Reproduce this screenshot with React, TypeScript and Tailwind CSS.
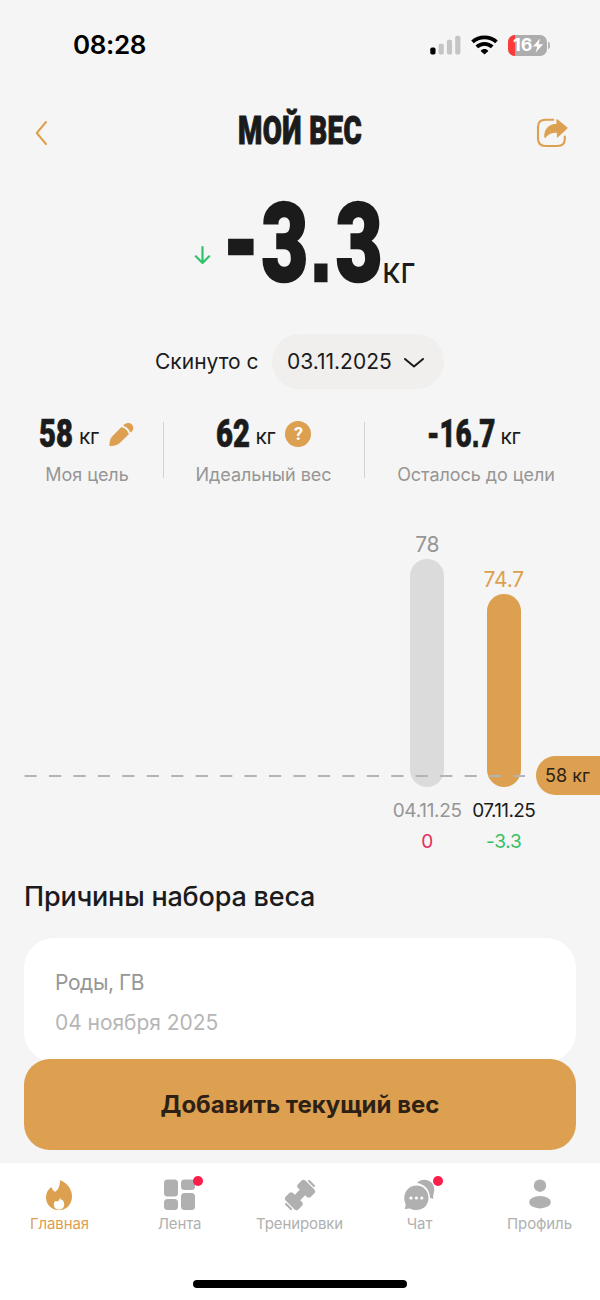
import React from 'react';
import clsx from 'clsx';

interface WeightEntry {
  date: string;
  weight: string;
  delta: string;
  height: number;
  current: boolean;
}

const entries: WeightEntry[] = [
  { date: '04.11.25', weight: '78', delta: '0', height: 228, current: false },
  { date: '07.11.25', weight: '74.7', delta: '-3.3', height: 193, current: true },
];

function StatusBar() {
  return (
    <div className="h-[90px] flex items-center justify-between pl-[73px] pr-[50px]">
      <span className="text-[26px] font-semibold text-black leading-none tracking-[-0.4px]">08:28</span>
      <div className="flex items-center">
        <svg width="31" height="20" viewBox="0 0 31 20" className="mr-[10px]">
          <rect x="0.3" y="12.5" width="5.2" height="7" rx="1.7" fill="#000" />
          <rect x="8.6" y="8.7" width="5.2" height="10.8" rx="1.7" fill="#c5c5c5" />
          <rect x="16.9" y="4.7" width="5.2" height="14.8" rx="1.7" fill="#c5c5c5" />
          <rect x="25.2" y="0.7" width="5.2" height="18.8" rx="1.7" fill="#c5c5c5" />
        </svg>
        <svg width="27" height="20" viewBox="0 0 27 20" className="mr-[10px]">
          <g fill="none" stroke="#000" strokeWidth="3.9">
            <path d="M1.5 6.9C8.3 0.8 18.7 0.8 25.5 6.9" />
            <path d="M5.8 11.9C10.2 7.8 16.8 7.8 21.2 11.9" />
          </g>
          <path d="M13.5 19.6L9.6 15.9C11.8 13.5 15.2 13.5 17.4 15.9Z" fill="#000" />
        </svg>
        <div className="relative w-[39px] h-[21px] rounded-[7px] overflow-hidden bg-[#adadad]">
          <div className="absolute left-0 top-0 w-[7px] h-full bg-[#fb3b37]" />
          <div className="relative flex items-center h-full pl-[5px]">
            <span className="text-[18px] font-bold text-white leading-none">16</span>
            <svg width="12" height="15" viewBox="0 0 10 13" className="-ml-[0.5px] shrink-0">
              <path d="M6.8 0.5L0.6 7.4H4.4L3 12.6L9.4 5.4H5.5Z" fill="#fff" />
            </svg>
          </div>
        </div>
        <div className="w-[2px] h-[7px] ml-[1px] rounded-r-full bg-[#b5b5b5]" />
      </div>
    </div>
  );
}

function Header() {
  return (
    <div className="h-[84px] flex items-center justify-between pl-[35px] pr-[32px]">
      <svg width="13" height="26" viewBox="0 0 13 26" className="mt-[2px]">
        <path d="M11 2L1.8 13L11 24" fill="none" stroke="#dca050" strokeWidth="2" strokeLinecap="round" strokeLinejoin="round" />
      </svg>
      <div className="w-[124px] ml-[16px] -mt-[2px]">
        <h1 className="w-max origin-left scale-x-[0.72] font-['Roboto'] font-black text-[38.5px] leading-none tracking-[0.6px] [-webkit-text-stroke:1px_#1b1b1b]">МОЙ ВЕС</h1>
      </div>
      <svg width="32" height="32" viewBox="0 0 32 32" className="mt-[2px]">
        <path d="M17.3 2.8H9.5Q2 2.8 2 10V21.5Q2 29 9.5 29H21.5Q28.6 29 28.8 22V19.5" fill="none" stroke="#dca050" strokeWidth="2.1" strokeLinecap="round" />
        <path d="M21 2.8L31 11L21.5 19.8V15.2C15.5 14.7 12 16.5 9 20.4C8 13 13 7.2 21 7.4Z" fill="#dca050" stroke="#dca050" strokeWidth="1.2" strokeLinejoin="round" />
      </svg>
    </div>
  );
}

function Stat({ value, label, width, scale, icon }: { value: React.ReactNode; label: string; width: string; scale: string; icon?: React.ReactNode }) {
  return (
    <div className="flex flex-col items-center">
      <div className="flex items-center h-[34px]">
        <div className={width}>
          <div className={clsx("w-max origin-left font-['Roboto'] font-black text-[38px] leading-[34px] [-webkit-text-stroke:0.7px_#1b1b1b]", scale)}>{value}</div>
        </div>
        <span className="ml-[7px] mt-[4px] text-[21px] leading-none tracking-[-0.3px]">кг</span>
        {icon}
      </div>
      <span className="mt-[14px] text-[18px] leading-[20px] tracking-[-0.05px] text-[#969696] whitespace-nowrap">{label}</span>
    </div>
  );
}

function Stats() {
  return (
    <div className="flex h-[72px] mt-[28px]">
      <div className="w-[163px] pl-[11px]">
        <Stat
          value="58"
          label="Моя цель"
          width="w-[33px] -ml-[1px]"
          scale="scale-x-[0.77]"
          icon={
            <svg width="25" height="25" viewBox="0 0 25 25" className="ml-[10px] mt-[1px]">
              <path d="M0.8 23.7C1 19.5 1.5 16.5 3.5 14.5L12.3 5.5C15.8 6.2 18.6 8.8 19.4 12.2L10.7 20.7C8.5 22.8 5 23.6 0.8 23.7Z" fill="#dca050" stroke="#dca050" strokeWidth="0.8" strokeLinejoin="round" />
              <path d="M14.2 3.7C16 0.6 20.2 -0.1 22.8 2.4C25.4 5 24.5 9 21.2 10.6C20.2 7.2 17.6 4.6 14.2 3.7Z" fill="#dca050" />
            </svg>
          }
        />
      </div>
      <div className="w-px h-[56px] mt-[5px] bg-[#d3d3d3]" />
      <div className="w-[200px] pr-[1px]">
        <Stat
          value="62"
          label="Идеальный вес"
          width="w-[33px]"
          scale="scale-x-[0.77]"
          icon={
            <div className="ml-[10px] -mt-[1px] w-[26px] h-[26px] rounded-full bg-[#dca050] text-white text-[18px] font-['Roboto'] font-bold flex items-center justify-center leading-none">?</div>
          }
        />
      </div>
      <div className="w-px h-[56px] mt-[5px] bg-[#d3d3d3]" />
      <div className="w-[222px]">
        <Stat
          value={<>-16<span className="font-['Liberation_Sans'] font-bold">.</span>7</>}
          label="Осталось до цели"
          width="w-[67px] -ml-[5px]"
          scale="scale-x-[0.73]"
        />
      </div>
    </div>
  );
}

function WeightChart() {
  return (
    <div className="relative h-[365px]">
      <div className="flex items-end h-full pl-[389px]">
        {entries.map((entry) => (
          <div key={entry.date} className="w-[76.5px] flex flex-col items-center">
            <span className={clsx('text-[21px] leading-[28px] tracking-[-0.2px]', entry.current ? 'text-[#dca050]' : 'text-[#969696]')}>
              {entry.weight}
            </span>
            <div
              className={clsx('w-[34px] rounded-full', entry.current ? 'bg-[#dca050]' : 'bg-[#dbdbdb]')}
              style={{ height: entry.height }}
            />
            <span className={clsx('mt-[12px] text-[19px] leading-[24px] whitespace-nowrap', entry.current ? 'text-[#1b1b1b] tracking-[-0.6px]' : 'text-[#969696] tracking-[-0.3px]')}>
              {entry.date}
            </span>
            <span className={clsx('mt-[7px] text-[19px] leading-[24px] tracking-[-0.2px]', entry.current ? 'text-[#32c167]' : 'text-[#e92c5e]')}>
              {entry.delta}
            </span>
          </div>
        ))}
      </div>
      {/* Goal line */}
      <svg width="502" height="2" className="absolute left-[24px] bottom-[77px]">
        <path d="M0.5 1H501" stroke="#b4b4b4" strokeWidth="2" strokeDasharray="12.2 12.25" />
      </svg>
      <div className="absolute right-0 bottom-[59px] w-[64px] h-[39px] rounded-l-full bg-[#dca050] flex items-center pl-[9px] text-[18px] text-[#2d2115]">
        58 кг
      </div>
    </div>
  );
}

const tabs = [
  {
    label: 'Главная',
    active: true,
    badge: false,
    icon: (
      <>
        <path d="M17 1C25 4.5 29 10.5 29 17.5C29 24.5 24.5 30 18 31H14C7.5 30 3 25 3 18.5C3 14 5 10.5 8.3 8C9.3 9.5 10 12 12.2 12.7C15.8 10.5 17 6 17 1Z" fill="currentColor" />
        <path d="M17 18.3C17.5 20.5 18 21 19.2 20.8C20.5 22 21.2 23.8 21.2 25.5C21.2 28.5 19 30.5 16 30.5C13 30.5 10.8 28.5 10.8 25.5C10.8 23.8 11.5 22.5 12.8 21.8C13.5 22.5 14 22.7 14.8 22.3C16.3 21.5 17 20 17 18.3Z" fill="#fff" />
      </>
    ),
  },
  {
    label: 'Лента',
    active: false,
    badge: true,
    icon: (
      <g fill="currentColor">
        <rect x="1" y="0.5" width="14" height="17" rx="3.5" />
        <rect x="18" y="0.5" width="14" height="10.5" rx="3.5" />
        <rect x="1" y="20" width="14" height="11" rx="3.5" />
        <rect x="18" y="14" width="14" height="17" rx="3.5" />
      </g>
    ),
  },
  {
    label: 'Тренировки',
    active: false,
    badge: false,
    icon: (
      <g fill="currentColor" transform="rotate(-45 17 16)">
        <rect x="8.5" y="12.2" width="17" height="7.6" />
        <rect x="3" y="7" width="10.5" height="18" rx="3" />
        <rect x="20.5" y="7" width="10.5" height="18" rx="3" />
        <rect x="-0.4" y="11.5" width="2.2" height="9" rx="1" />
        <rect x="32.2" y="11.5" width="2.2" height="9" rx="1" />
      </g>
    ),
  },
  {
    label: 'Чат',
    active: false,
    badge: true,
    icon: (
      <>
        <path d="M14 4C19 -2 31.5 0.5 31.3 11C31.2 14 29.8 15.5 30.3 20L27 18.8C27 11 21.5 5 14 4Z" fill="currentColor" />
        <path d="M13.5 6.5C20.5 6.5 25.5 12 25.5 19C25.5 26 20.5 31 13.5 31C11 31 9 30.5 7.3 29.7C5.5 29.2 3.5 30.5 1.7 29.8C2.7 27.5 2.9 26 2.2 24C1.6 22.5 1.3 21 1.3 19C1.3 12 6.5 6.5 13.5 6.5Z" fill="currentColor" />
        <circle cx="8" cy="19" r="1.6" fill="#fff" />
        <circle cx="13.4" cy="19" r="1.6" fill="#fff" />
        <circle cx="18.8" cy="19" r="1.6" fill="#fff" />
      </>
    ),
  },
  {
    label: 'Профиль',
    active: false,
    badge: false,
    icon: (
      <g fill="currentColor">
        <circle cx="17" cy="6.7" r="6.2" />
        <ellipse cx="17" cy="23.2" rx="10.8" ry="6.2" />
      </g>
    ),
  },
];

function TabBar() {
  return (
    <div className="mt-[13px] h-[137px] bg-white flex flex-col justify-between">
      <div className="grid grid-cols-5 pt-[16px] -ml-[0.5px] mr-[0.5px]">
        {tabs.map((tab) => (
          <div key={tab.label} className={clsx('flex flex-col items-center', tab.active ? 'text-[#dca050]' : 'text-[#b0b0b0]')}>
            <div className="relative">
              <svg width="33" height="32" viewBox="0 0 33 32" className="overflow-visible">{tab.icon}</svg>
              {tab.badge && <div className="absolute -right-[7px] -top-[3px] w-[10px] h-[10px] rounded-full bg-[#fb1e4b]" />}
            </div>
            <span className="mt-[4px] text-[15px] leading-[18px] tracking-[-0.1px]">{tab.label}</span>
          </div>
        ))}
      </div>
      <div className="w-[214px] h-[8px] mb-[12px] rounded-full bg-black self-center" />
    </div>
  );
}

export default function App() {
  return (
    <div className="w-[600px] h-[1300px] overflow-hidden bg-[#f5f5f5] text-[#1b1b1b] font-['Inter',sans-serif]">
      <StatusBar />
      <Header />
      <div className="h-[160px] flex items-start pl-[194px]">
        <svg width="17" height="20" viewBox="0 0 17 20" className="mt-[71px]">
          <path d="M8.5 2V18M1.8 11.3L8.5 18L15.2 11.3" fill="none" stroke="#2fc46a" strokeWidth="2.2" strokeLinecap="round" strokeLinejoin="round" />
        </svg>
        <div className="w-[159px] ml-[12px] mt-[13px]">
          <div className="w-max origin-left scale-x-[0.74] font-['Roboto'] font-black text-[109px] leading-[112px] [-webkit-text-stroke:2.5px_#1b1b1b]">
            -<span className="ml-[3px]">3</span>
            <span className="ml-[2px] mr-[5px] font-['Liberation_Sans'] font-bold">.</span>3
          </div>
        </div>
        <span className="w-[34px] mt-[76px]">
          <span className="block w-max origin-left scale-x-[0.91] text-[37px] leading-[40px]">кг</span>
        </span>
      </div>

      <div className="h-[55px] flex items-center pl-[155px]">
        <span className="w-[117px] text-[21px]">Скинуто с</span>
        <div className="w-[172px] h-full rounded-full bg-[#f0efed] flex items-center pl-[15px]">
          <span className="w-[117px] text-[21px]">03.11.2025</span>
          <svg width="20" height="12" viewBox="0 0 20 12" className="mt-[2px]">
            <path d="M1 2L10 9.5L19 2" fill="none" stroke="#1b1b1b" strokeWidth="2" strokeLinecap="round" strokeLinejoin="round" />
          </svg>
        </div>
      </div>

      <Stats />
      <WeightChart />

      <h2 className="mt-[25px] h-[36px] ml-[24px] text-[27px] leading-[36px] font-medium tracking-[-0.2px]">Причины набора веса</h2>
      <div className="mt-[23px] mx-[24px] h-[124px] rounded-[30px] bg-white px-[31px] pt-[31px]">
        <p className="text-[21px] leading-[28px] text-[#969696] tracking-[-0.4px]">Роды, ГВ</p>
        <p className="mt-[12px] text-[21px] leading-[28px] text-[#b6b6b6] tracking-[-0.05px]">04 ноября 2025</p>
      </div>
      <button className="relative block mx-[24px] -mt-[3px] w-[552px] h-[91px] rounded-[26px] bg-[#dca050] text-[#2d2115] text-[24px] font-bold">
        Добавить текущий вес
      </button>
      <TabBar />
    </div>
  );
}
